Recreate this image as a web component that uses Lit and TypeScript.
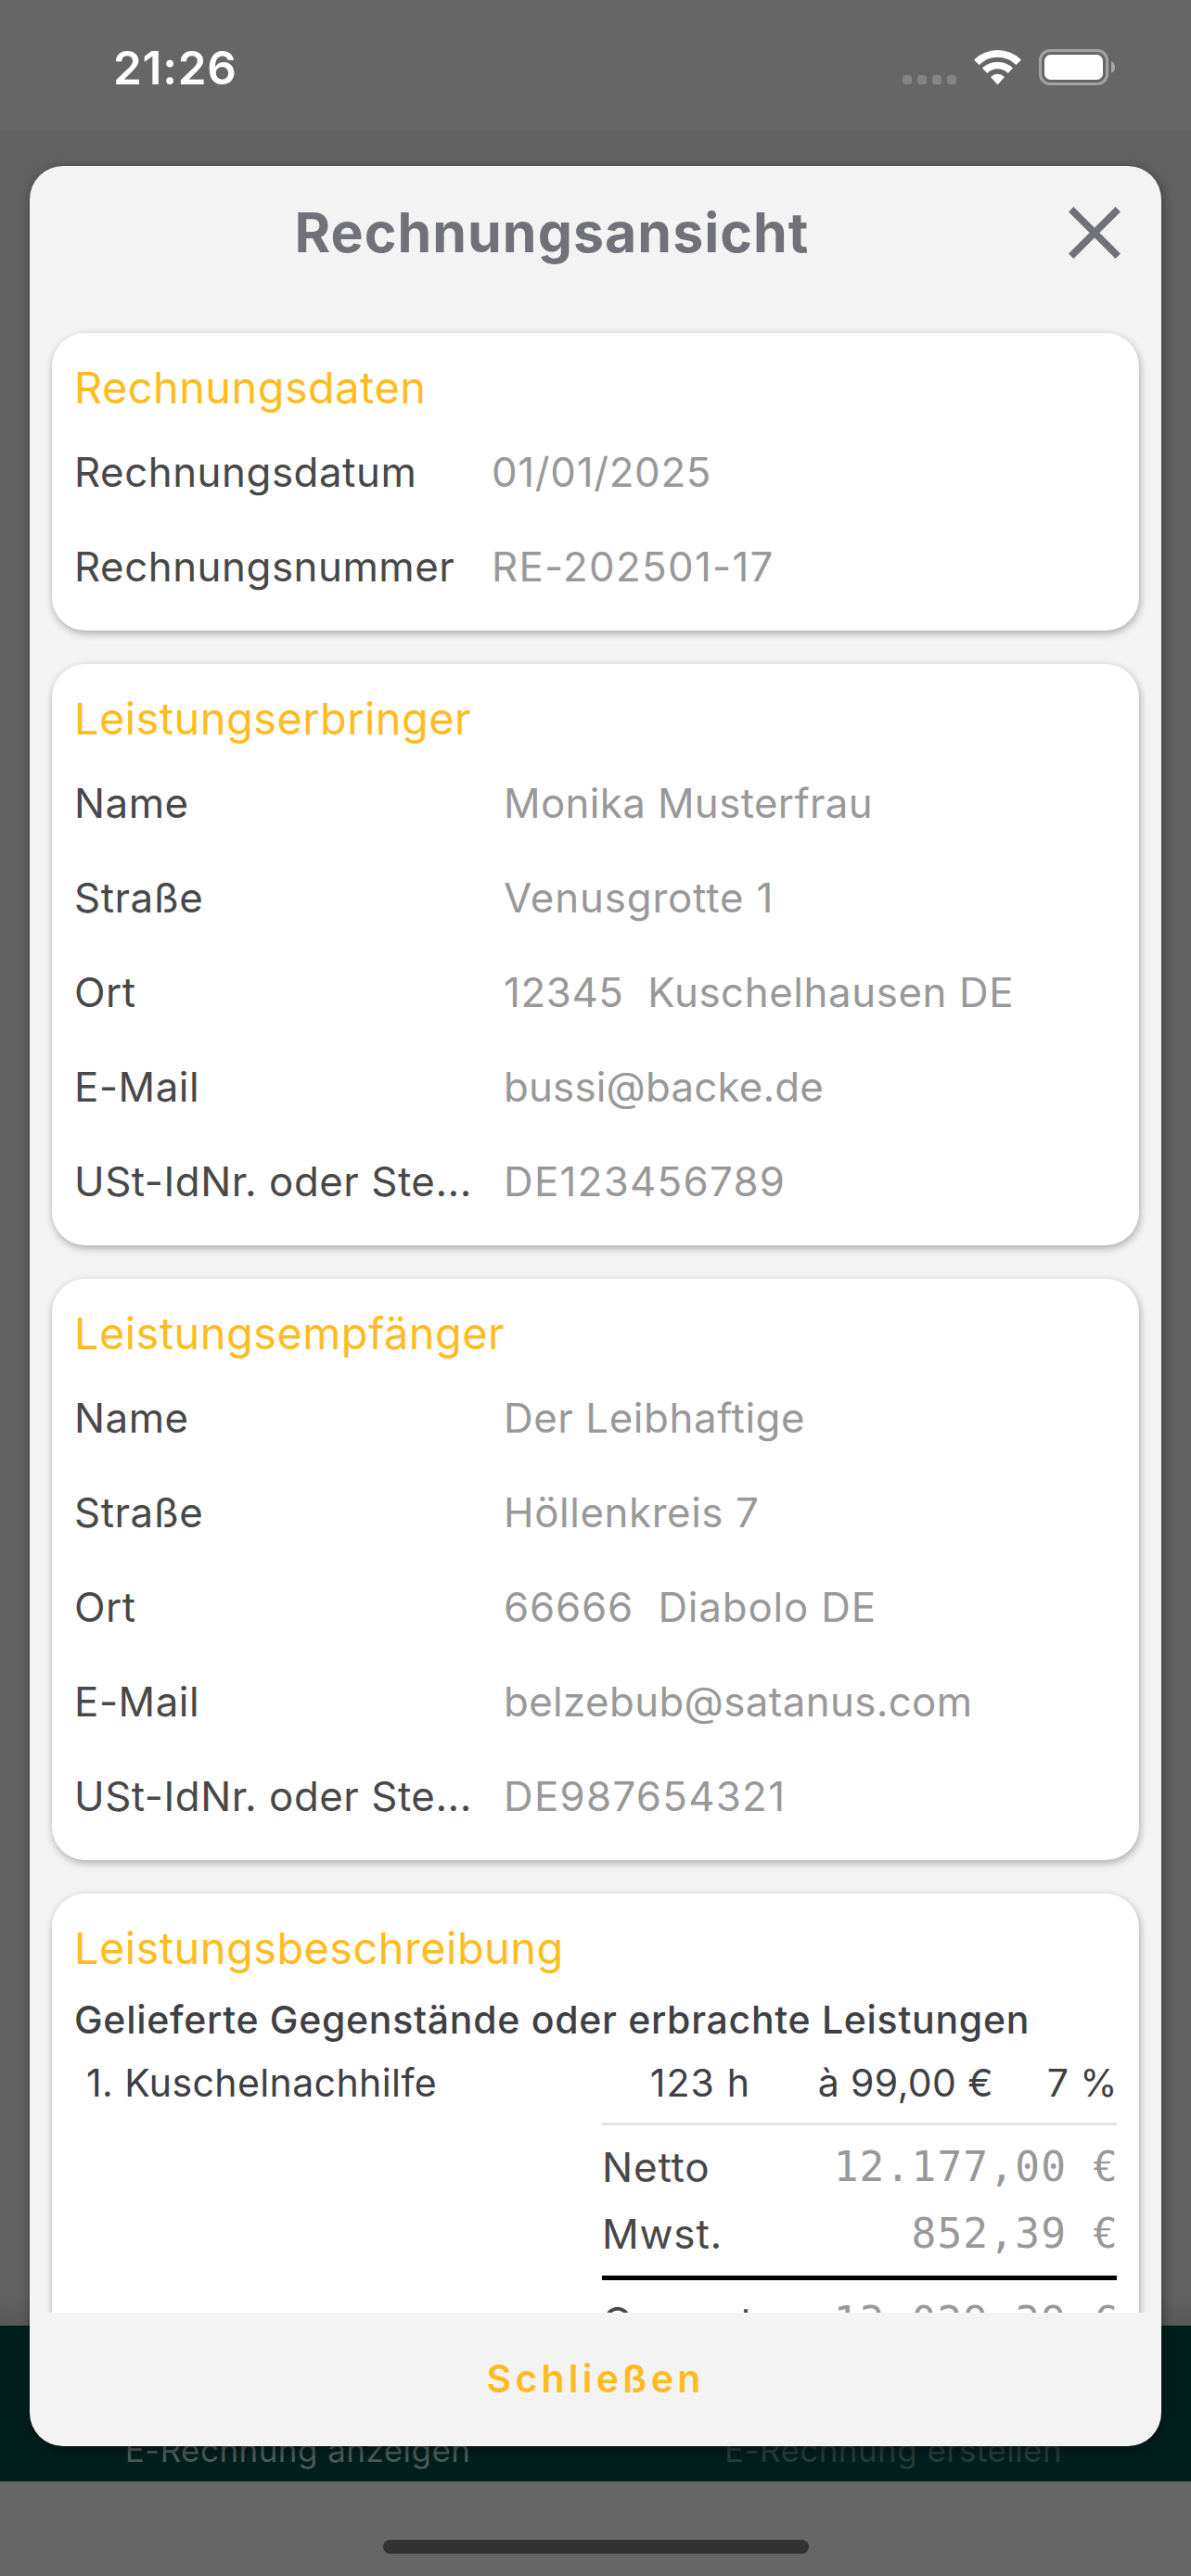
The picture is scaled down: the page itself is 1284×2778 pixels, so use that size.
import { LitElement, html, css, nothing } from "lit";
import { customElement, property } from "lit/decorators.js";

interface Field {
  label: string;
  value: string;
  fit?: string;
}

const invoiceFields: Field[] = [
  { label: "Rechnungsdatum", value: "01/01/2025", fit: "date" },
  { label: "Rechnungsnummer", value: "RE-202501-17", fit: "digits" },
];

const supplierFields: Field[] = [
  { label: "Name", value: "Monika Musterfrau", fit: "tight" },
  { label: "Straße", value: "Venusgrotte 1", fit: "mixed" },
  { label: "Ort", value: "12345  Kuschelhausen DE" },
  { label: "E-Mail", value: "bussi@backe.de", fit: "mail" },
  { label: "USt-IdNr. oder Ste...", value: "DE123456789", fit: "digits" },
];

const customerFields: Field[] = [
  { label: "Name", value: "Der Leibhaftige" },
  { label: "Straße", value: "Höllenkreis 7" },
  { label: "Ort", value: "66666  Diabolo DE", fit: "mixed" },
  { label: "E-Mail", value: "belzebub@satanus.com", fit: "tight" },
  { label: "USt-IdNr. oder Ste...", value: "DE987654321", fit: "digits" },
];

@customElement("status-bar")
class StatusBar extends LitElement {
  static styles = css`
    :host {
      display: flex;
      justify-content: space-between;
      align-items: flex-start;
      box-sizing: border-box;
      height: 141px;
      padding: 53px 82px 0 122px;
      background: #666;
      color: #fff;
    }
    .time {
      font-size: 49.5px;
      font-weight: 600;
      line-height: 40px;
      letter-spacing: 0.7px;
    }
    .icons {
      display: flex;
      gap: 19px;
      height: 39px;
    }
    svg {
      display: block;
    }
  `;

  render() {
    return html`
      <div class="time">21:26</div>
      <div class="icons">
        <svg width="58" height="39" viewBox="0 0 58 39" fill="#858585">
          <rect x="0" y="28" width="10" height="10" rx="3.6" />
          <rect x="16" y="28" width="10" height="10" rx="3.6" />
          <rect x="32" y="28" width="10" height="10" rx="3.6" />
          <rect x="48" y="28" width="10" height="10" rx="3.6" />
        </svg>
        <svg width="51" height="39" viewBox="0 0 51 39" fill="none" stroke="#fff">
          <path d="M2.8 14.3A32.1 32.1 0 0 1 48.2 14.3" stroke-width="7.8" />
          <path d="M11.7 23.2A19.5 19.5 0 0 1 39.3 23.2" stroke-width="7.6" />
          <path d="M18.6 29.4A10.4 10.4 0 0 1 32.4 29.4Q33 30 32.4 30.7L26.3 37.4Q25.5 38.2 24.7 37.4L18.6 30.7Q18 30 18.6 29.4Z" fill="#fff" stroke="none" />
        </svg>
        <svg width="82" height="39" viewBox="0 0 82 39">
          <rect x="1.5" y="1.5" width="72" height="36" rx="10.5" fill="none" stroke="#a3a3a3" stroke-width="3" />
          <rect x="6" y="6" width="63" height="27" rx="6.5" fill="#fff" />
          <path d="M78 13Q82 15 82 19.5T78 26Z" fill="#a8a8a8" />
        </svg>
      </div>
    `;
  }
}

@customElement("invoice-card")
class InvoiceCard extends LitElement {
  static styles = css`
    :host {
      display: block;
      padding: 30px 24px 18px 24px;
      border-radius: 36px;
      background: #fff;
      box-shadow: 1px 3px 8px rgba(0, 0, 0, 0.3);
    }
    .heading {
      margin: 0;
      font-size: 46.9px;
      font-weight: 400;
      line-height: 58px;
      letter-spacing: 0.46px;
      color: #ffbc21;
    }
    .fields {
      display: grid;
      grid-template-columns: 426px 1fr;
      column-gap: 37px;
      margin-top: 12px;
      margin-bottom: -1px;
    }
    .fields.compact {
      grid-template-columns: 409px 1fr;
      column-gap: 41px;
    }
    .label,
    .value {
      font-size: 43.8px;
      line-height: 102px;
      white-space: pre;
    }
    .label {
      letter-spacing: 0.55px;
      color: #484848;
    }
    .value {
      letter-spacing: 0.6px;
      color: #999;
    }
    .value.tight {
      letter-spacing: 0.38px;
    }
    .value.mail {
      letter-spacing: 0.2px;
    }
    .value.date {
      letter-spacing: 0.7px;
    }
    .value.mixed {
      letter-spacing: 0.85px;
    }
    .value.digits {
      letter-spacing: 1.3px;
    }
  `;

  @property() heading = "";
  @property({ attribute: false }) fields: Field[] = [];
  @property({ type: Boolean }) compact = false;

  render() {
    return html`
      <h2 class="heading">${this.heading}</h2>
      ${this.fields.length
        ? html`<div class="fields ${this.compact ? "compact" : ""}">
            ${this.fields.map(
              (f) => html`<span class="label">${f.label}</span><span class="value ${f.fit ?? ""}">${f.value}</span>`
            )}
          </div>`
        : nothing}
      <slot></slot>
    `;
  }
}

@customElement("app-root")
class AppRoot extends LitElement {
  static styles = css`
    :host {
      display: block;
      position: relative;
      width: 1284px;
      height: 2778px;
      overflow: hidden;
      background: #666;
      font-family: Inter, "Liberation Sans", sans-serif;
    }
    .page {
      display: flex;
      flex-direction: column;
      height: 100%;
    }
    .content {
      height: 2367px;
      background: linear-gradient(#626262 2335px, #595959);
    }
    .tabs {
      display: grid;
      grid-template-columns: 1fr 1fr;
      align-items: end;
      box-sizing: border-box;
      height: 168px;
      padding-bottom: 9px;
      background: #001f1c;
      text-align: center;
      font-size: 35px;
      line-height: 50px;
      letter-spacing: 0.45px;
      color: #4b5a58;
    }
    .tab.disabled {
      color: #263c39;
    }
    .home {
      width: 459px;
      height: 15px;
      margin: 63px auto 0;
      border-radius: 8px;
      background: #323232;
    }
    .sheet {
      position: absolute;
      left: 32px;
      top: 179px;
      display: flex;
      flex-direction: column;
      width: 1220px;
      height: 2459px;
      overflow: hidden;
      border-radius: 36px;
      background: #f3f3f3;
      box-shadow: 1px 3px 12px rgba(0, 0, 0, 0.45);
    }
    .header {
      display: flex;
      align-items: flex-start;
      box-sizing: border-box;
      flex: none;
      height: 162px;
      padding: 32px 44px 0 6px;
      color: #71717a;
    }
    .title {
      flex: 1;
      margin: 0;
      text-align: center;
      font-size: 59px;
      font-weight: 700;
      line-height: 80px;
      letter-spacing: 1.05px;
    }
    .close {
      display: block;
      margin-top: 12px;
    }
    .scroll {
      display: flex;
      flex-direction: column;
      gap: 36px;
      flex: 1;
      min-height: 0;
      overflow: hidden;
      padding: 18px 24px 0;
    }
    .scroll > * {
      flex: none;
    }
    .footer {
      flex: none;
      height: 144px;
      text-align: center;
      font-size: 41px;
      font-weight: 560;
      line-height: 143px;
      letter-spacing: 4.2px;
      color: #ffbc21;
    }
    .sub {
      margin: 18px 0 0;
      font-size: 41px;
      font-weight: 500;
      line-height: 60px;
      letter-spacing: 0.7px;
      white-space: nowrap;
      color: #3f3f46;
    }
    .item {
      display: grid;
      grid-template-columns: 1fr 120px 262px 134px;
      margin-top: 8px;
      padding-left: 13px;
      margin-right: -1px;
      font-size: 41px;
      line-height: 60px;
      letter-spacing: 0.4px;
      color: #3f3f46;
    }
    .num {
      text-align: right;
    }
    .num.qty {
      letter-spacing: 1.1px;
    }
    .totals {
      width: 555px;
      margin: 13px 0 0 auto;
    }
    .rule {
      height: 3px;
      background: #e4e4e4;
    }
    .rule.strong {
      height: 5px;
      background: #000;
    }
    .sums {
      padding: 9px 0;
    }
    .sum {
      display: flex;
      justify-content: space-between;
      height: 72px;
      line-height: 72px;
      font-size: 44px;
      letter-spacing: 0.8px;
      color: #484848;
    }
    .amount {
      margin-right: -2px;
      font-family: "DejaVu Sans Mono", "Liberation Mono", monospace;
      font-size: 44.5px;
      letter-spacing: 1.15px;
      color: #999;
    }
  `;

  private sum(label: string, amount: string) {
    return html`<div class="sum"><span>${label}</span><span class="amount">${amount}</span></div>`;
  }

  render() {
    return html`
      <div class="page">
        <status-bar></status-bar>
        <div class="content"></div>
        <div class="tabs">
          <span class="tab">E-Rechnung anzeigen</span>
          <span class="tab disabled">E-Rechnung erstellen</span>
        </div>
        <div class="home"></div>
      </div>
      <div class="sheet">
        <div class="header">
          <h1 class="title">Rechnungsansicht</h1>
          <svg class="close" width="56" height="56" viewBox="0 0 56 56" stroke="currentColor" stroke-width="7.6">
            <path d="M2.7 2.7L53.3 53.3M53.3 2.7L2.7 53.3" />
          </svg>
        </div>
        <div class="scroll">
          <invoice-card compact heading="Rechnungsdaten" .fields=${invoiceFields}></invoice-card>
          <invoice-card heading="Leistungserbringer" .fields=${supplierFields}></invoice-card>
          <invoice-card heading="Leistungsempfänger" .fields=${customerFields}></invoice-card>
          <invoice-card heading="Leistungsbeschreibung">
            <p class="sub">Gelieferte Gegenstände oder erbrachte Leistungen</p>
            <div class="item">
              <span>1. Kuschelnachhilfe</span>
              <span class="num qty">123 h</span>
              <span class="num">à 99,00 €</span>
              <span class="num">7 %</span>
            </div>
            <div class="totals">
              <div class="rule"></div>
              <div class="sums">${this.sum("Netto", "12.177,00 €")}${this.sum("Mwst.", "852,39 €")}</div>
              <div class="rule strong"></div>
              <div class="sums">${this.sum("Gesamt", "13.029,39 €")}</div>
            </div>
          </invoice-card>
        </div>
        <div class="footer">Schließen</div>
      </div>
    `;
  }
}
